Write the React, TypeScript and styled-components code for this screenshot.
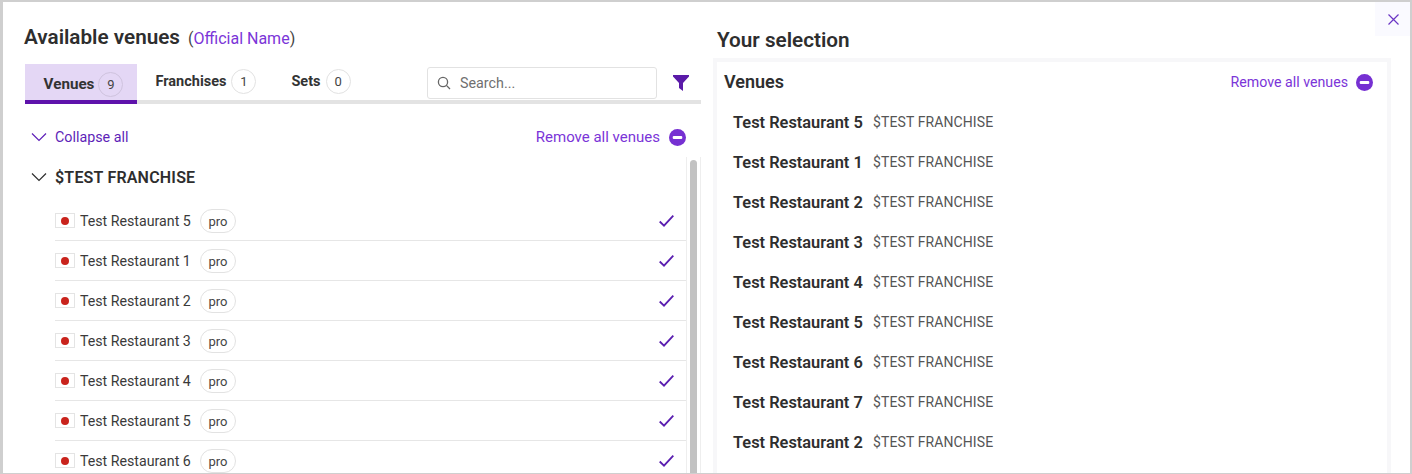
import React from "react";
import styled, { createGlobalStyle } from "styled-components";

const Global = createGlobalStyle`
  html, body { margin: 0; padding: 0; background: #fff; overflow: hidden; }
  body { font-family: "Roboto", "Liberation Sans", sans-serif; color: #2e2e2e; }
`;

const Frame = styled.div`
  box-sizing: border-box;
  width: 1412px;
  height: 474px;
  border: solid #cfcfcf;
  border-width: 2px 2px 1px 3px;
  display: flex;
  position: relative;
  overflow: hidden;
  background: #fff;
`;

const LeftColumn = styled.section`
  width: 698px;
  flex: none;
  padding-left: 22px;
  box-sizing: border-box;
  display: flex;
  flex-direction: column;
`;

const TitleRow = styled.div`
  height: 62px;
  box-sizing: border-box;
  padding-top: 22px;
  margin-left: -1px;
  display: flex;
  align-items: baseline;
  gap: 8px;
`;

const Title = styled.h2`
  margin: 0;
  font-size: 20.7px;
  line-height: 26px;
  font-weight: 600;
  color: #2e2e2e;
`;

const Hint = styled.span`
  font-size: 16px;
  color: #444;
`;

const HintLink = styled.span`
  color: #7b35d8;
`;

const TabBar = styled.div`
  width: 676px;
  height: 40px;
  box-sizing: border-box;
  border-bottom: 4px solid #e3e3e3;
  display: flex;
  align-items: flex-start;
`;

const Tab = styled.div<{ $active?: boolean; $w: number }>`
  width: ${(p) => p.$w}px;
  height: ${(p) => (p.$active ? "40px" : "34px")};
  box-sizing: border-box;
  flex: none;
  display: flex;
  align-items: center;
  justify-content: center;
  gap: ${(p) => (p.$active ? "4px" : "5px")};
  padding: ${(p) => (p.$active ? "4px 0 0 5px" : "0")};
  font-size: ${(p) => (p.$active ? "15.2px" : "14.5px")};
  font-weight: 700;
  color: #333;
  background: ${(p) => (p.$active ? "#e4d7f5" : "transparent")};
  border-bottom: ${(p) => (p.$active ? "4px solid #5e12ab" : "none")};
`;

const Count = styled.span<{ $active?: boolean }>`
  width: 25px;
  height: 25px;
  box-sizing: border-box;
  border-radius: 50%;
  border: 1px solid ${(p) => (p.$active ? "#cfc3de" : "#e2e2e2")};
  display: flex;
  align-items: center;
  justify-content: center;
  font-size: 13px;
  font-weight: 400;
  color: #444;
  background: ${(p) => (p.$active ? "transparent" : "#fff")};
`;

const SearchBox = styled.div`
  width: 230px;
  height: 32px;
  margin-left: auto;
  margin-top: 3px;
  box-sizing: border-box;
  border: 1px solid #e2e2e2;
  border-radius: 3px;
  display: flex;
  align-items: center;
  gap: 9px;
  padding-left: 9px;
  font-size: 14.3px;
  color: #707070;
  background: #fff;
`;

const FilterSlot = styled.div`
  width: 44px;
  height: 38px;
  box-sizing: border-box;
  padding-left: 4px;
  flex: none;
  display: flex;
  align-items: center;
  justify-content: center;
`;

const ActionRow = styled.div`
  width: 661px;
  height: 53px;
  padding-top: 13px;
  box-sizing: border-box;
  display: flex;
  align-items: center;
  justify-content: space-between;
`;

const Collapse = styled.div`
  display: flex;
  align-items: center;
  gap: 8px;
  padding-left: 6px;
  font-size: 14.3px;
  color: #5e1fb8;
`;

const RemoveAll = styled.div<{ $small?: boolean }>`
  display: flex;
  align-items: center;
  gap: ${(p) => (p.$small ? "8px" : "9px")};
  font-size: ${(p) => (p.$small ? "14.2px" : "15px")};
  color: #7b35d8;
`;

const ListArea = styled.div`
  flex: 1;
  display: flex;
  min-height: 0;
  overflow: hidden;
`;

const ListBody = styled.div`
  width: 661px;
  flex: none;
`;

const GroupHead = styled.div`
  height: 44px;
  box-sizing: border-box;
  padding: 0 0 4px 6px;
  display: flex;
  align-items: center;
  gap: 8px;
  font-size: 16px;
  font-weight: 600;
  letter-spacing: 0.2px;
  color: #2e2e2e;
`;

const Row = styled.div`
  height: 40px;
  margin-left: 30px;
  box-sizing: border-box;
  border-bottom: 1px solid #e6e6e6;
  display: flex;
  align-items: center;
  padding: 1px 12px 0 0;
  font-size: 14.2px;
  color: #3a3a3a;
`;

const Flag = styled.span`
  width: 20px;
  height: 15px;
  box-sizing: border-box;
  border: 1px solid #e4e4e4;
  background: #fff;
  display: flex;
  align-items: center;
  justify-content: center;
  margin-right: 5px;
  margin-top: -1px;
  flex: none;

  &::after {
    content: "";
    width: 8px;
    height: 8px;
    border-radius: 50%;
    background: #c9231c;
  }
`;

const VenueName = styled.span`
  width: 120px;
  flex: none;
`;

const Pro = styled.span`
  width: 36px;
  height: 24px;
  box-sizing: border-box;
  border: 1px solid #e2e2e2;
  border-radius: 12px;
  display: flex;
  align-items: center;
  justify-content: center;
  font-size: 13px;
  color: #444;
`;

const CheckSlot = styled.span`
  margin-left: auto;
  display: flex;
`;

const Track = styled.div`
  width: 15px;
  flex: none;
  box-sizing: border-box;
  border-left: 1px solid #eeeeee;
  border-right: 1px solid #eeeeee;
  padding: 3px 3px 0;
`;

const Thumb = styled.div`
  height: 330px;
  border-radius: 4px 4px 0 0;
  background: #c2c2c2;
`;

const RightColumn = styled.section`
  flex: 1;
  min-width: 0;
  display: flex;
  flex-direction: column;
  padding: 0 19px 0 12px;
`;

const RightTitleRow = styled.div`
  height: 56px;
  box-sizing: border-box;
  padding: 25px 0 0 4px;
`;

const SelectionPanel = styled.div`
  flex: 1;
  border: 4px solid #f7f7f9;
  border-bottom: none;
  box-sizing: border-box;
  overflow: hidden;
  padding: 0 14px 0 7px;
`;

const PanelHead = styled.div`
  height: 40px;
  display: flex;
  align-items: center;
  justify-content: space-between;
`;

const PanelTitle = styled.h3`
  margin: -2px 0 0;
  font-size: 18px;
  font-weight: 600;
  color: #2e2e2e;
`;

const SelectedRow = styled.div`
  height: 40px;
  display: flex;
  align-items: center;
  padding-left: 9px;
`;

const SelectedName = styled.span`
  width: 140px;
  flex: none;
  font-size: 16.4px;
  font-weight: 600;
  color: #2e2e2e;
`;

const SelectedGroup = styled.span`
  font-size: 14px;
  color: #555;
  letter-spacing: 0.1px;
`;

const CloseButton = styled.button`
  position: absolute;
  top: 0;
  right: 0;
  width: 35px;
  height: 34px;
  padding: 0 0 0 1px;
  border: none;
  background: #fafaff;
  display: flex;
  align-items: center;
  justify-content: center;
`;

const Chevron = () => (
  <svg width="16" height="16" viewBox="0 0 16 16" fill="none" stroke="currentColor" strokeWidth="1.2">
    <path d="M1 4.5 8 11.5 15 4.5" />
  </svg>
);

const MinusCircle = () => (
  <svg width="17" height="17" viewBox="0 0 16 16">
    <circle cx="8" cy="8" r="8" fill="#7630d2" />
    <rect x="3.5" y="6.5" width="9" height="3" rx="1" fill="#fff" />
  </svg>
);

const Check = () => (
  <svg width="15" height="12" viewBox="0 0 15 12" fill="none" stroke="#5a1eb0" strokeWidth="1.8">
    <path d="M.7 6.5 5 10.7 14.3.7" />
  </svg>
);

const SearchIcon = () => (
  <svg width="14" height="14" viewBox="0 0 14 14" fill="none" stroke="#666" strokeWidth="1.3">
    <circle cx="6" cy="6" r="4.6" />
    <path d="M9.4 9.4 13 13" />
  </svg>
);

const Funnel = () => (
  <svg width="16" height="16" viewBox="0 0 16 16" fill="#5a1aa8">
    <path d="M0 0H16V1.5L10 8V16L6 13V8L0 1.5Z" />
  </svg>
);

const CloseIcon = () => (
  <svg width="11" height="11" viewBox="0 0 11 11" fill="none" stroke="#6a35c4" strokeWidth="1.2">
    <path d="M.5.5 10.5 10.5M10.5.5.5 10.5" />
  </svg>
);

const available = [5, 1, 2, 3, 4, 5, 6];
const selected = [5, 1, 2, 3, 4, 5, 6, 7, 2];

export default function App() {
  return (
    <>
      <Global />
      <Frame>
        <LeftColumn>
          <TitleRow>
            <Title>Available venues</Title>
            <Hint>
              (<HintLink>Official Name</HintLink>)
            </Hint>
          </TitleRow>
          <TabBar>
            <Tab $active $w={112}>
              Venues <Count $active>9</Count>
            </Tab>
            <Tab $w={138}>
              Franchises <Count>1</Count>
            </Tab>
            <Tab $w={92}>
              Sets <Count>0</Count>
            </Tab>
            <SearchBox>
              <SearchIcon />
              Search...
            </SearchBox>
            <FilterSlot>
              <Funnel />
            </FilterSlot>
          </TabBar>
          <ActionRow>
            <Collapse>
              <Chevron />
              Collapse all
            </Collapse>
            <RemoveAll>
              Remove all venues
              <MinusCircle />
            </RemoveAll>
          </ActionRow>
          <ListArea>
            <ListBody>
              <GroupHead>
                <Chevron />
                $TEST FRANCHISE
              </GroupHead>
              {available.map((n, i) => (
                <Row key={i}>
                  <Flag />
                  <VenueName>Test Restaurant {n}</VenueName>
                  <Pro>pro</Pro>
                  <CheckSlot>
                    <Check />
                  </CheckSlot>
                </Row>
              ))}
            </ListBody>
            <Track>
              <Thumb />
            </Track>
          </ListArea>
        </LeftColumn>
        <RightColumn>
          <RightTitleRow>
            <Title>Your selection</Title>
          </RightTitleRow>
          <SelectionPanel>
            <PanelHead>
              <PanelTitle>Venues</PanelTitle>
              <RemoveAll $small>
                Remove all venues
                <MinusCircle />
              </RemoveAll>
            </PanelHead>
            {selected.map((n, i) => (
              <SelectedRow key={i}>
                <SelectedName>Test Restaurant {n}</SelectedName>
                <SelectedGroup>$TEST FRANCHISE</SelectedGroup>
              </SelectedRow>
            ))}
          </SelectionPanel>
        </RightColumn>
        <CloseButton aria-label="Close">
          <CloseIcon />
        </CloseButton>
      </Frame>
    </>
  );
}
